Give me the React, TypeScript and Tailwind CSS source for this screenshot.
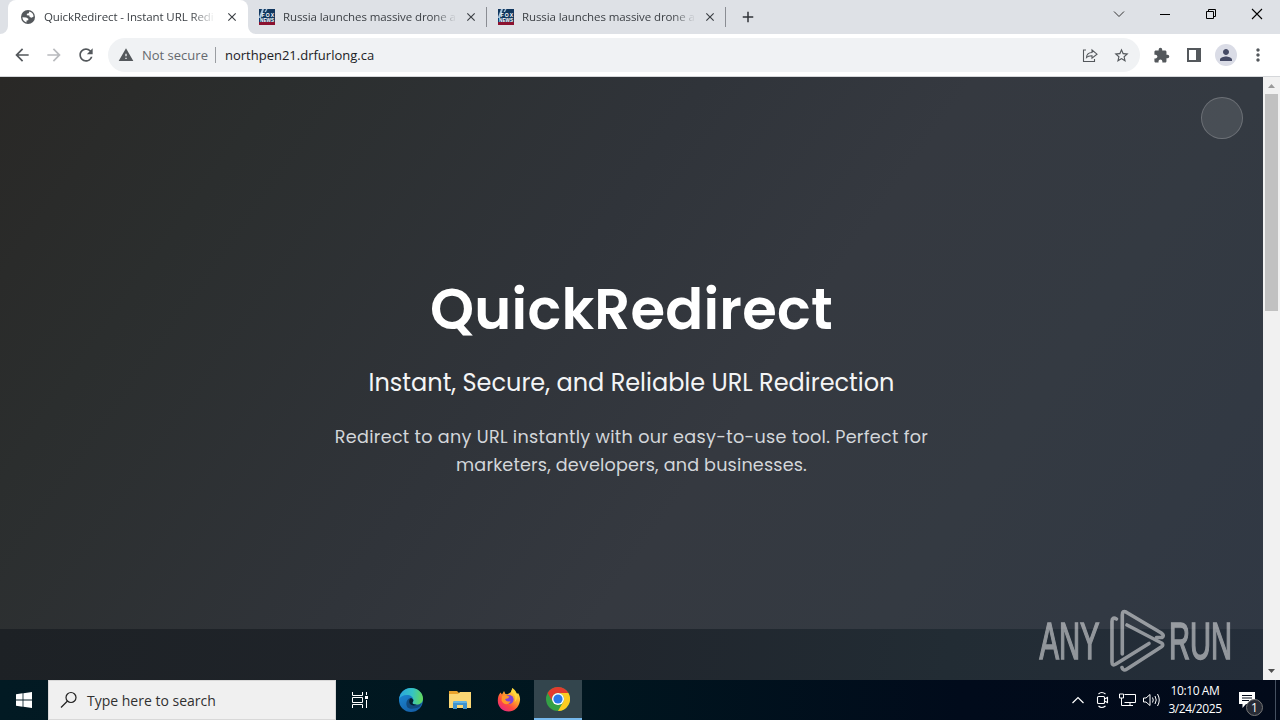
import type { ReactNode } from "react";
import {
  MdAdd,
  MdArrowBack,
  MdArrowForward,
  MdClose,
  MdExtension,
  MdMoreVert,
  MdPerson,
  MdRefresh,
  MdStarBorder,
  MdWarning,
} from "react-icons/md";

const UI_FONT = "font-['Open_Sans','Noto_Sans',sans-serif]";

const NEWS_TABS = [
  { id: 1, title: "Russia launches massive drone a" },
  { id: 2, title: "Russia launches massive drone a" },
];

function GlobeIcon() {
  return (
    <svg className="size-4 shrink-0" viewBox="0 0 16 16">
      <circle cx="8" cy="8" r="7" fill="#54585c" />
      <path d="M2.4 8.3 6.2 8.5 8.4 9.8 8.2 11.2 6.6 11.6 6.4 13.4A5.8 5.8 0 0 1 2.4 8.3Z" fill="#fff" />
      <path d="M9.3 2.4A5.8 5.8 0 0 1 13.6 7.6L11.6 8.8 9.6 8 9.4 6.6 6.8 6.3 6.9 4.8 8.8 4.3Z" fill="#fff" />
    </svg>
  );
}

function FoxIcon() {
  return (
    <svg className="size-4 shrink-0" viewBox="0 0 16 16">
      <rect width="16" height="16" fill="#11375f" />
      <path d="M3 0h2L2 9H0V8ZM7 0h1.5L7 3H5.5Z" fill="#a9c4dc" />
      <rect y="13" width="16" height="3" fill="#8c1230" />
      <text x="2.5" y="7.6" fontSize="5" fontWeight="700" fill="#fff" textLength="12.5" fontFamily="Liberation Sans, sans-serif">FOX</text>
      <text x="1" y="12.6" fontSize="4.6" fontWeight="700" fill="#fff" textLength="14" fontFamily="Liberation Sans, sans-serif">NEWS</text>
    </svg>
  );
}

function TabTitle({ children }: { children: ReactNode }) {
  return (
    <span className="min-w-0 flex-1 whitespace-nowrap text-[11.5px] leading-4 [mask-image:linear-gradient(to_right,black_86%,transparent)]">
      {children}
    </span>
  );
}

function TabStrip() {
  return (
    <div className="flex h-[34px] bg-[#dee1e6] text-[#3c4045]">
      <div className="relative ml-2 flex w-[240px] items-center rounded-t-lg bg-white pl-3 pr-[9px]">
        <svg className="absolute -left-2 bottom-0 h-2 w-2" viewBox="0 0 8 8"><path d="M8 0v8H0A8 8 0 0 0 8 0Z" fill="#fff" /></svg>
        <svg className="absolute -right-2 bottom-0 h-2 w-2" viewBox="0 0 8 8"><path d="M0 0v8h8A8 8 0 0 1 0 0Z" fill="#fff" /></svg>
        <GlobeIcon />
        <div className="ml-2 flex w-[171px] tracking-[-0.1px]"><TabTitle>QuickRedirect - Instant URL Redi</TabTitle></div>
        <MdClose className="ml-auto size-[14px]" />
      </div>
      {NEWS_TABS.map((tab) => (
        <div key={tab.id} className="flex w-[239px] items-center pl-[11px]">
          <FoxIcon />
          <div className="ml-2 flex w-[174px] tracking-[-0.1px]"><TabTitle>{tab.title}</TabTitle></div>
          <MdClose className="ml-[7px] size-[14px]" />
          <div className="ml-auto h-5 w-px bg-[#8a8d93]" />
        </div>
      ))}
      <div className="flex w-11 items-center justify-center">
        <MdAdd className="size-[18px] text-[#303338]" />
      </div>
      <div className="ml-auto flex w-[167px] items-center justify-between pb-[6px] pr-[17px] text-black">
        <svg className="size-[12px]" viewBox="0 0 12 12" fill="none" stroke="#333"><path d="m1 3.5 5 5 5-5" /></svg>
        <svg className="size-[12px]" viewBox="0 0 12 12" stroke="currentColor"><path d="M1 6.5h10" /></svg>
        <svg className="size-[12px]" viewBox="0 0 12 12" fill="none" stroke="currentColor"><path d="M1.5 3.5h7v7h-7zM3.5 3.5v-2h7v7h-2" /></svg>
        <svg className="size-[12px]" viewBox="0 0 12 12" stroke="currentColor" strokeWidth="1.1"><path d="m1 1 10 10M11 1 1 11" /></svg>
      </div>
    </div>
  );
}

function Toolbar() {
  return (
    <div className="flex h-[43px] items-center border-b border-[#d5d7da] bg-white pl-3 text-[#54585c]">
      <MdArrowBack className="size-5" />
      <MdArrowForward className="ml-3 size-5 text-[#b9bbbe]" />
      <MdRefresh className="ml-3 size-5" />
      <div className="ml-3 flex h-[34px] w-[1032px] items-center rounded-full bg-[#f0f2f4] pl-[10px] pr-[10px] text-[13px]">
        <MdWarning className="size-4" />
        <span className="ml-[8px] w-[66px] whitespace-nowrap pt-px text-[#65696e]">Not secure</span>
        <span className="ml-[7px] h-4 w-px bg-[#9a9da1]" />
        <span className="ml-[9px] pt-px text-[#202124]">northpen21.drfurlong.ca</span>
        <svg className="ml-auto size-4" viewBox="0 0 16 16" fill="none" stroke="currentColor" strokeWidth="1.1">
          <path d="M4 3H1.5v11.5h11V12M4.5 10.5C4.7 7 6.7 5.6 10 5.5V3l5 4.2-5 4V8.7c-2.7-.1-4.2.4-5.5 1.8Z" />
        </svg>
        <MdStarBorder className="ml-[15px] size-[17px]" />
      </div>
      <MdExtension className="ml-[13px] size-[17px]" />
      <svg className="ml-[17px] size-[14px]" viewBox="0 0 14 14"><path d="M0 0h14v14H0zM2 2v10h7V2z" fill="currentColor" fillRule="evenodd" /></svg>
      <div className="ml-[14px] flex size-[22px] items-center justify-center rounded-full bg-[#dadce6]">
        <MdPerson className="size-[18px] text-[#454a65]" />
      </div>
      <MdMoreVert className="ml-[11px] size-5" />
    </div>
  );
}

function AnyRunMark() {
  return (
    <svg className="absolute bottom-[8px] left-[1036px] h-[64px] w-[198px] opacity-50" viewBox="0 0 198 64" fill="none">
      <g fill="#fff" stroke="#fff" strokeWidth="1.6" fontFamily="Liberation Sans Narrow, Liberation Sans, sans-serif" fontSize="51">
        <text transform="translate(3.5 51) scale(.6 1)" textLength="100" lengthAdjust="spacingAndGlyphs">ANY</text>
        <text transform="translate(133 51) scale(.6 1)" textLength="105" lengthAdjust="spacingAndGlyphs">RUN</text>
      </g>
      <g stroke="#fff" strokeWidth="3.6" strokeLinejoin="round" strokeLinecap="round">
        <path d="M80.500 11q-4.500-2.500-4.500 2.500V54q0 4.500 4 2L113 35.500" />
        <path d="M86.300 46V7q0-5 4-2.800l35 20.800q3.500 2.500.7 4.500h-5.500" />
        <path d="m91 17 34.500 18q2.500 2 0 3.800L91 61q-4 2.500-5-1.500" />
      </g>
    </svg>
  );
}

function PageView() {
  return (
    <div className="flex h-[603px]">
      <main className="relative flex w-[1263px] flex-col bg-[linear-gradient(125deg,#292826_0%,#2b2e2e_17%,#30343a_42%,#353940_58%,#343a42_75%,#303844_100%)] text-center font-['Poppins','Inter',sans-serif]">
        <section className="flex h-[552px] flex-col items-center pt-[191px]">
          <h1 className="text-[56px] font-semibold leading-[84px] tracking-[0.25px] text-white">QuickRedirect</h1>
          <p className="mt-[13px] text-[24px] leading-9 text-[#f4f5f6]">Instant, Secure, and Reliable URL Redirection</p>
          <p className="mt-[22px] whitespace-nowrap text-[17.6px] leading-7 tracking-[0.3px] text-[#d3d6da]">
            Redirect to any URL instantly with our easy-to-use tool. Perfect for<br />
            <span className="tracking-[0.17px]">marketers, developers, and businesses.</span>
          </p>
        </section>
        <div className="h-[51px] bg-[linear-gradient(100deg,#1d2125,#20252c_45%,#222c34_75%,#252e3a)]" />
        <div className="absolute right-5 top-5 size-[42px] rounded-full border border-white/20 bg-white/10" />
        <AnyRunMark />
      </main>
      <div className="flex w-[17px] flex-col items-center bg-[#f1f1f1]">
        <svg className="h-[17px] w-[17px]" viewBox="0 0 17 17"><path d="m5 11 3.5-4 3.5 4z" fill="#9a9a9a" /></svg>
        <div className="h-[217px] w-[13px] bg-[#c1c1c1]" />
        <svg className="mt-auto h-[17px] w-[17px]" viewBox="0 0 17 17"><path d="m5 6 3.5 4L12 6z" fill="#505050" /></svg>
      </div>
    </div>
  );
}

function EdgeIcon() {
  return (
    <svg className="size-6" viewBox="0 0 24 24">
      <defs>
        <linearGradient id="edgeTop" x1="0" y1="0.3" x2="1" y2="0.4">
          <stop offset="0" stopColor="#2aa5dd" />
          <stop offset="0.55" stopColor="#35c3c4" />
          <stop offset="1" stopColor="#63d85a" />
        </linearGradient>
        <linearGradient id="edgeBottom" x1="0" y1="0" x2="0.6" y2="1">
          <stop offset="0" stopColor="#1c8fdc" />
          <stop offset="1" stopColor="#1560a8" />
        </linearGradient>
      </defs>
      <circle cx="12" cy="12" r="12" fill="url(#edgeBottom)" />
      <path d="M.1 11C1 4.500 6 0 12 0c7 0 12 5 12 10.500 0 4-3 6.300-6.500 6.300-3 0-4.200-1-4.200-1.700 0-.8 1-1.200 1-3.100C14.300 9 11.500 7 8 7 4 7 1 8.800.1 11Z" fill="url(#edgeTop)" />
      <path d="M8.500 19.500C6 15 8 10.500 12.100 10c1.400.8 2.200 1.900 2.200 2 0 1.900-1 2.300-1 3.100 0 .7 1.200 1.700 4.200 1.700 2 0 3.800-.6 5-1.900-.4 1.600-1.200 3-2.200 4.200-4.300 1.900-9 2.400-11.800.4Z" fill="#124a7e" />
      <path d="M12.100 10c1.400.8 2.200 1.900 2.200 2 0 1.900-1 2.300-1 3.100 0 .7 1.200 1.700 4.200 1.700-4 1.700-7.500-.3-7.300-3.300.1-1.800.8-2.900 1.900-3.500Z" fill="#04202f" />
    </svg>
  );
}

function FolderIcon() {
  return (
    <svg className="h-[20px] w-[22px]" viewBox="0 0 22 20">
      <path d="M0 1h8l2 2h11v5H0Z" fill="#e9a32c" />
      <path d="M0 4h9l2-2h11v16H0Z" fill="#fbd774" />
      <path d="M4 19v-6q0-2 2-2h10q2 0 2 2v6h-4v-4H8v4Z" fill="#3f93ce" />
      <path d="M4 13q0-2 2-2h10q2 0 2 2Z" fill="#62b4e4" />
    </svg>
  );
}

function FirefoxIcon() {
  return (
    <svg className="size-6" viewBox="0 0 24 24">
      <defs>
        <linearGradient id="fox" x1="0.85" y1="0.05" x2="0.2" y2="0.95">
          <stop offset="0" stopColor="#fff04a" />
          <stop offset="0.4" stopColor="#ffa12b" />
          <stop offset="0.7" stopColor="#ff4b3d" />
          <stop offset="1" stopColor="#e82a80" />
        </linearGradient>
      </defs>
      <path d="M3.500 4.500 5 6.500 7 3l1.500 3 2 .2L14 4l1.500-4c1 3 3 3.500 4.500 6l1-1c2 3 2.500 6 1.700 9-1.200 5.500-5.500 9.500-10.900 9.500C5.500 23.500.8 19 .8 12.800c0-3.500.9-6.200 2.700-8.300Z" fill="url(#fox)" />
      <circle cx="12" cy="11.500" r="4.600" fill="#8043d7" />
      <path d="M5 8c3-2 5 .2 7.500.3l-1.300 2-3 .7c.2 2 2.500 3.300 5.300 2-1 4.500-7.500 4-9-.5Z" fill="#ff9829" />
      <path d="M14 4c4 2 5.500 6 3.500 10 4-3 3-9 .2-12L15.500 0Z" fill="#ffd83b" />
    </svg>
  );
}

function ChromeIcon() {
  return (
    <svg className="size-6" viewBox="0 0 24 24">
      <circle cx="12" cy="12" r="12" fill="#34a045" />
      <path d="M1.600 6A12 12 0 0 1 22.400 6H12a6 6 0 0 0-5.200 9Z" fill="#e23b2e" />
      <path d="M22.400 6A12 12 0 0 1 12 24l5.200-9A6 6 0 0 0 12 6Z" fill="#fccb20" />
      <circle cx="12" cy="12" r="6" fill="#fff" />
      <circle cx="12" cy="12" r="4.600" fill="#2878e8" />
    </svg>
  );
}

function Taskbar() {
  return (
    <div className="flex h-10 bg-[linear-gradient(90deg,#021a23,#00161f_45%,#010b1b_75%,#020a1a)] text-white">
      <div className="flex w-12 items-center justify-center">
        <svg className="size-4" viewBox="0 0 16 16" fill="#fff"><path d="M0 2.200 6.600 1.300v6.300H0zM7.400 1.200 16 0v7.600H7.400zM0 8.400h6.600v6.300L0 13.800zM7.400 8.400H16V16l-8.600-1.200z" /></svg>
      </div>
      <div className="flex w-[288px] items-center border border-[#d8d8d8] bg-[#f0f0f0] pl-[11px] text-[#303030]">
        <svg className="size-[18px]" viewBox="0 0 18 18" fill="none" stroke="#222" strokeWidth="1.2"><circle cx="11" cy="6.500" r="5" /><path d="M7.500 10 1 16.500" /></svg>
        <span className="ml-[9px] text-[14px]">Type here to search</span>
      </div>
      <div className="flex w-12 items-center justify-center">
        <svg className="size-4" viewBox="0 0 16 16" fill="none" stroke="#fff"><path d="M.5 0v3.500h10V0M.5 16v-3.500h10V16M.5 5.500h10v5H.5zM14.500 0v3M14.500 8v8" /><path d="M13 4h3v3h-3z" fill="#fff" stroke="none" /></svg>
      </div>
      <div className="flex w-[54px] items-center justify-center"><EdgeIcon /></div>
      <div className="flex w-[44px] items-center justify-center"><FolderIcon /></div>
      <div className="flex w-[54px] items-center justify-center"><FirefoxIcon /></div>
      <div className="-ml-[2px] flex w-12 items-center justify-center border-b-2 border-[#76b9ed] bg-[#33454d]"><ChromeIcon /></div>
      <div className="ml-auto flex items-center">
        <svg className="h-[14px] w-[12px]" viewBox="0 0 12 14" fill="none" stroke="#fff" strokeWidth="1.200"><path d="m.5 10 5.500-5.500L11.500 10" /></svg>
        <svg className="ml-[12px] h-[18px] w-[14px]" viewBox="0 0 14 18" fill="none" stroke="#fff" strokeWidth="1.100"><rect x="1.500" y="5.500" width="7" height="7" rx="1" /><path d="m8.500 8 3-1.500v5l-3-1.500M2.500 3q3-3 7 0M2.500 15q3 3 7 0" /></svg>
        <svg className="ml-[9px] h-[14px] w-[17px]" viewBox="0 0 17 14" fill="none" stroke="#fff"><path d="M5.500 1.500h11v8h-11M8 12.500h6M11 9.500v3M.5 1h4v4h-4zM2.500 5v7.500H8" /></svg>
        <svg className="ml-[7px] h-[14px] w-[18px]" viewBox="0 0 18 14" fill="none" stroke="#fff"><path d="M.5 5v4H3l4 3.500v-11L3 5zM9.500 4.500q1.500 2.500 0 5M12 3q2.500 4 0 8M14.500 1q3.500 6 0 12" /></svg>
        <div className="ml-[5px] w-[58px] whitespace-nowrap text-center text-[12px] leading-[18px] tracking-[-0.4px]">
          <div>10:10 AM</div>
          <div>3/24/2025</div>
        </div>
        <div className="relative ml-[13px] h-[26px] w-[43px]">
          <svg className="absolute left-[2px] top-[5px] h-[17px] w-[16px]" viewBox="0 0 16 17"><path d="M0 0h16v12H7l-3.500 4V12H0z" fill="#fff" /><path d="M3 3.500h10M3 6h10M3 8.500h7" stroke="#020a1a" /></svg>
          <span className="absolute left-[9px] top-[12px] flex size-[17px] items-center justify-center rounded-full border border-[#777] bg-[#272b35] text-[12px] leading-none">1</span>
          <span className="absolute -top-[7px] right-[4px] h-10 w-px bg-[#455060]" />
        </div>
      </div>
    </div>
  );
}

export default function App() {
  return (
    <div className={`h-[720px] w-[1280px] overflow-hidden bg-white ${UI_FONT}`}>
      <TabStrip />
      <Toolbar />
      <PageView />
      <Taskbar />
    </div>
  );
}
